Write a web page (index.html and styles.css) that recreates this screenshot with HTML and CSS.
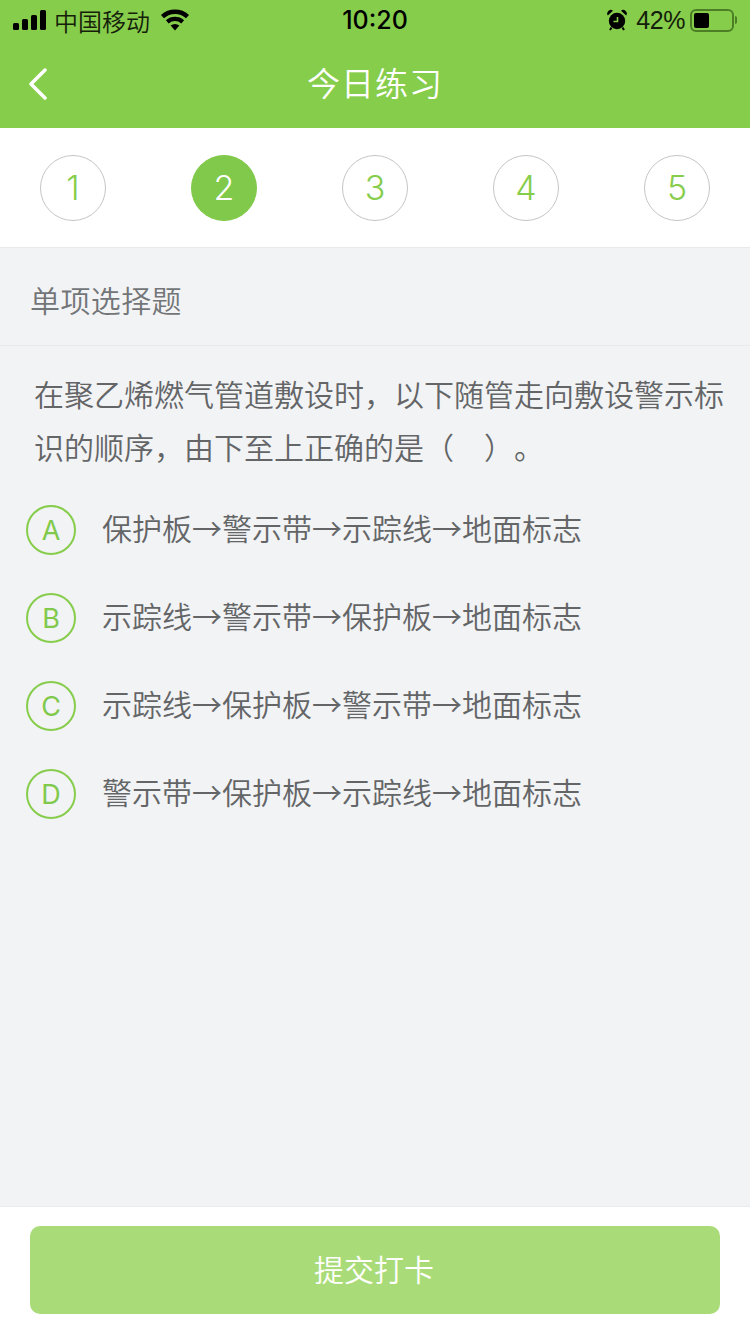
FILE: index.html
```html
<!DOCTYPE html>
<html lang="zh">
<head>
<meta charset="utf-8">
<title>今日练习</title>
<link rel="stylesheet" href="styles.css">
</head>
<body>
<div class="page">
  <header class="header">
    <div class="status">
      <div class="status-left">
        <svg class="signal" width="34" height="20" viewBox="0 0 34 20"><rect x="0" y="13" width="6" height="7" rx="1.5"/><rect x="9" y="9" width="6" height="11" rx="1.5"/><rect x="18" y="5" width="6" height="15" rx="1.5"/><rect x="27" y="0" width="6" height="20" rx="1.5"/></svg>
        <span class="carrier">中国移动</span>
        <svg class="wifi" width="30" height="22" viewBox="0 0 30 22"><path d="M15 21.5 10.6 16.6a6.6 6.6 0 0 1 8.8 0Z"/><path d="M8.7 14.5 5.9 11.3a13.7 13.7 0 0 1 18.2 0l-2.8 3.2a9.5 9.5 0 0 0-12.6 0Z"/><path d="M4 9.2 1 5.9a20.6 20.6 0 0 1 28 0l-3 3.3a16.3 16.3 0 0 0-22 0Z"/></svg>
      </div>
      <span class="time">10:20</span>
      <div class="status-right">
        <svg class="alarm" width="20" height="22" viewBox="0 0 20 22"><circle cx="10" cy="12" r="8.200"/><path d="M0.800 6.500a3.600 3.600 0 0 1 5.200-4.800ZM19.200 6.500a3.600 3.600 0 0 0-5.200-4.800Z"/><path d="M4.500 18.500 3 21M15.500 18.500l1.500 2.500" class="alarm-leg"/><path d="M10.500 8v4.500h-4" class="alarm-hand"/></svg>
        <span class="percent">42%</span>
        <span class="battery"><span class="battery-level"></span></span>
        <span class="battery-cap"></span>
      </div>
    </div>
    <div class="navbar">
      <svg class="back" width="20" height="32" viewBox="0 0 20 32"><path d="M17 2 3 16l14 14"/></svg>
      <h1 class="title">今日练习</h1>
    </div>
  </header>
  <nav class="steps">
    <span class="step">1</span>
    <span class="step step-active">2</span>
    <span class="step">3</span>
    <span class="step">4</span>
    <span class="step">5</span>
  </nav>
  <main class="content">
    <div class="type">单项选择题</div>
    <p class="question">在聚乙烯燃气管道敷设时，以下随管走向敷设警示标识的顺序，由下至上正确的是（&ensp;&ensp;）。</p>
    <ul class="options">
      <li class="option"><span class="letter">A</span><span class="option-text">保护板→警示带→示踪线→地面标志</span></li>
      <li class="option"><span class="letter">B</span><span class="option-text">示踪线→警示带→保护板→地面标志</span></li>
      <li class="option"><span class="letter">C</span><span class="option-text">示踪线→保护板→警示带→地面标志</span></li>
      <li class="option"><span class="letter">D</span><span class="option-text">警示带→保护板→示踪线→地面标志</span></li>
    </ul>
  </main>
  <footer class="footer">
    <button class="submit" type="button">提交打卡</button>
  </footer>
</div>
</body>
</html>
```
FILE: styles.css
```css
* { box-sizing: border-box; }
html, body { margin: 0; padding: 0; }
body {
  font-family: "Liberation Sans", "Noto Sans CJK SC", sans-serif;
  background: #f2f3f5;
}
.page {
  width: 750px;
  height: 1334px;
  display: flex;
  flex-direction: column;
  overflow: hidden;
}
.header { background: #87cd4c; height: 128px; flex: none; }
.status {
  height: 40px;
  display: flex;
  align-items: center;
  justify-content: space-between;
  padding: 0 13px;
  color: #000;
  position: relative;
}
.status-left, .status-right { display: flex; align-items: center; }
.carrier { font-size: 24px; margin-left: 7px; color: #14200a; font-weight: 350; }
.wifi { margin-left: 10px; }
.time {
  position: absolute;
  left: 0;
  right: 0;
  text-align: center;
  font-size: 25px;
  font-family: Inter, "Liberation Sans", sans-serif;
  font-weight: 500;
  pointer-events: none;
}
.alarm { margin-right: 9px; }
.alarm-leg, .alarm-hand { fill: none; }
.alarm-leg { stroke: #000; stroke-width: 2; }
.alarm-hand { stroke: #87cd4c; stroke-width: 1.600; }
.percent { font-size: 25px; letter-spacing: -0.4px; color: #14200a; }
.battery {
  margin-left: 5px;
  width: 44px;
  height: 23px;
  border: 2px solid #4c7f25;
  border-radius: 6px;
  padding: 2px;
  display: flex;
}
.battery-level { width: 15px; background: #000; border-radius: 2px; }
.battery-cap {
  width: 2px;
  height: 8px;
  margin-left: 1px;
  background: #4c7f25;
  border-radius: 0 2px 2px 0;
}
.navbar {
  height: 88px;
  display: flex;
  align-items: center;
  justify-content: center;
  position: relative;
}
.back {
  position: absolute;
  left: 28px;
  top: 28px;
  fill: none;
  stroke: #fff;
  stroke-width: 3.5;
  stroke-linecap: round;
  stroke-linejoin: round;
}
.title {
  margin: 0;
  font-size: 33px;
  font-weight: 350;
  color: #fff;
  letter-spacing: 1px;
  padding-bottom: 5px;
}
.steps {
  height: 120px;
  flex: none;
  background: #fff;
  border-bottom: 1px solid #e8e9eb;
  display: flex;
  justify-content: space-between;
  align-items: flex-start;
  padding: 27px 40px 0;
}
.step {
  width: 66px;
  height: 66px;
  border: 1px solid #c4c6c6;
  border-radius: 50%;
  display: flex;
  align-items: center;
  justify-content: center;
  padding-bottom: 2px;
  font-size: 34px;
  font-family: Inter, sans-serif;
  font-weight: 300;
  color: #87cd4c;
}
.step-active { background: #80c94a; border-color: #80c94a; color: #fff; }
.content { flex: 1; min-height: 0; }
.type {
  height: 98px;
  border-bottom: 1px solid #e9eaec;
  padding: 4px 0 0 30px;
  display: flex;
  align-items: center;
  font-size: 30px;
  font-weight: 350;
  letter-spacing: 0.4px;
  color: #737678;
}
.question {
  margin: 0;
  padding: 23px 20px 0 34px;
  font-size: 30px;
  font-weight: 350;
  line-height: 53px;
  color: #636567;
  text-spacing-trim: space-all;
}
.options { list-style: none; margin: 0; padding: 11px 0 0 26px; }
.option { height: 88px; display: flex; align-items: center; }
.letter {
  width: 50px;
  height: 50px;
  flex: none;
  border: 2px solid #87cd4c;
  border-radius: 50%;
  display: flex;
  align-items: center;
  justify-content: center;
  font-size: 27px;
  font-family: Inter, sans-serif;
  font-weight: 400;
  color: #80c94a;
}
.option-text {
  margin-left: 26px;
  padding-bottom: 6px;
  font-family: "Noto Sans CJK SC", sans-serif;
  font-size: 30px;
  font-weight: 350;
  color: #636567;
}
.footer {
  height: 128px;
  flex: none;
  background: #fff;
  border-top: 1px solid #e9eaec;
  padding: 19px 30px 0;
}
.submit {
  display: block;
  width: 100%;
  height: 88px;
  border: 0;
  border-radius: 10px;
  background: #a9dc78;
  color: #fff;
  font-family: inherit;
  font-size: 30px;
  font-weight: 350;
  padding: 0 2px 5px 0;
}
```
